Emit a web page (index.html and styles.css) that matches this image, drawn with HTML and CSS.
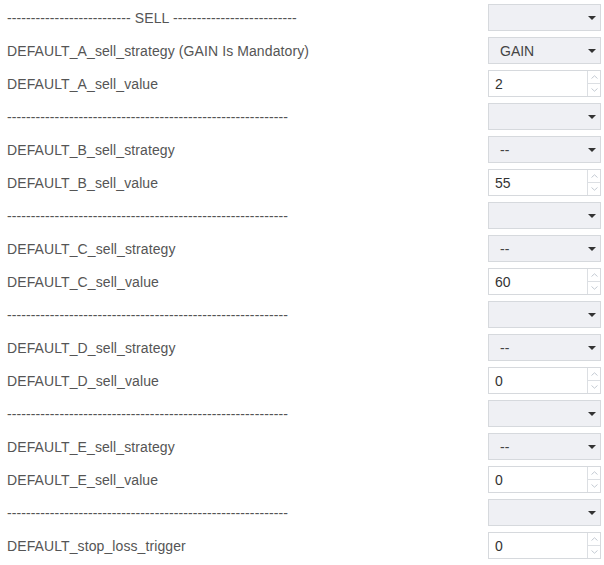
FILE: index.html
```html
<!DOCTYPE html>
<html>
<head>
<meta charset="utf-8">
<link rel="stylesheet" href="styles.css">
</head>
<body>
<div class="form">
  <div class="row"><span class="label">-------------------------- SELL --------------------------</span><div class="select"><span class="sel-text"></span><span class="arrow"></span></div></div>
  <div class="row"><span class="label">DEFAULT_A_sell_strategy (GAIN Is Mandatory)</span><div class="select"><span class="sel-text">GAIN</span><span class="arrow"></span></div></div>
  <div class="row"><span class="label">DEFAULT_A_sell_value</span><div class="num"><span class="num-text">2</span><div class="spin"><span class="up"><svg width="7" height="4" viewBox="0 0 7 4"><path d="M0.5 3.5 L3.5 0.8 L6.5 3.5" fill="none" stroke="#b4bcc6" stroke-width="0.8"/></svg></span><span class="down"><svg width="7" height="4" viewBox="0 0 7 4"><path d="M0.5 0.5 L3.5 3.2 L6.5 0.5" fill="none" stroke="#b4bcc6" stroke-width="0.8"/></svg></span></div></div></div>

  <div class="row"><span class="label">-----------------------------------------------------------</span><div class="select"><span class="sel-text"></span><span class="arrow"></span></div></div>
  <div class="row"><span class="label">DEFAULT_B_sell_strategy</span><div class="select"><span class="sel-text">--</span><span class="arrow"></span></div></div>
  <div class="row"><span class="label">DEFAULT_B_sell_value</span><div class="num"><span class="num-text">55</span><div class="spin"><span class="up"><svg width="7" height="4" viewBox="0 0 7 4"><path d="M0.5 3.5 L3.5 0.8 L6.5 3.5" fill="none" stroke="#b4bcc6" stroke-width="0.8"/></svg></span><span class="down"><svg width="7" height="4" viewBox="0 0 7 4"><path d="M0.5 0.5 L3.5 3.2 L6.5 0.5" fill="none" stroke="#b4bcc6" stroke-width="0.8"/></svg></span></div></div></div>

  <div class="row"><span class="label">-----------------------------------------------------------</span><div class="select"><span class="sel-text"></span><span class="arrow"></span></div></div>
  <div class="row"><span class="label">DEFAULT_C_sell_strategy</span><div class="select"><span class="sel-text">--</span><span class="arrow"></span></div></div>
  <div class="row"><span class="label">DEFAULT_C_sell_value</span><div class="num"><span class="num-text">60</span><div class="spin"><span class="up"><svg width="7" height="4" viewBox="0 0 7 4"><path d="M0.5 3.5 L3.5 0.8 L6.5 3.5" fill="none" stroke="#b4bcc6" stroke-width="0.8"/></svg></span><span class="down"><svg width="7" height="4" viewBox="0 0 7 4"><path d="M0.5 0.5 L3.5 3.2 L6.5 0.5" fill="none" stroke="#b4bcc6" stroke-width="0.8"/></svg></span></div></div></div>

  <div class="row"><span class="label">-----------------------------------------------------------</span><div class="select"><span class="sel-text"></span><span class="arrow"></span></div></div>
  <div class="row"><span class="label">DEFAULT_D_sell_strategy</span><div class="select"><span class="sel-text">--</span><span class="arrow"></span></div></div>
  <div class="row"><span class="label">DEFAULT_D_sell_value</span><div class="num"><span class="num-text">0</span><div class="spin"><span class="up"><svg width="7" height="4" viewBox="0 0 7 4"><path d="M0.5 3.5 L3.5 0.8 L6.5 3.5" fill="none" stroke="#b4bcc6" stroke-width="0.8"/></svg></span><span class="down"><svg width="7" height="4" viewBox="0 0 7 4"><path d="M0.5 0.5 L3.5 3.2 L6.5 0.5" fill="none" stroke="#b4bcc6" stroke-width="0.8"/></svg></span></div></div></div>

  <div class="row"><span class="label">-----------------------------------------------------------</span><div class="select"><span class="sel-text"></span><span class="arrow"></span></div></div>
  <div class="row"><span class="label">DEFAULT_E_sell_strategy</span><div class="select"><span class="sel-text">--</span><span class="arrow"></span></div></div>
  <div class="row"><span class="label">DEFAULT_E_sell_value</span><div class="num"><span class="num-text">0</span><div class="spin"><span class="up"><svg width="7" height="4" viewBox="0 0 7 4"><path d="M0.5 3.5 L3.5 0.8 L6.5 3.5" fill="none" stroke="#b4bcc6" stroke-width="0.8"/></svg></span><span class="down"><svg width="7" height="4" viewBox="0 0 7 4"><path d="M0.5 0.5 L3.5 3.2 L6.5 0.5" fill="none" stroke="#b4bcc6" stroke-width="0.8"/></svg></span></div></div></div>

  <div class="row"><span class="label">-----------------------------------------------------------</span><div class="select"><span class="sel-text"></span><span class="arrow"></span></div></div>
  <div class="row"><span class="label">DEFAULT_stop_loss_trigger</span><div class="num"><span class="num-text">0</span><div class="spin"><span class="up"><svg width="7" height="4" viewBox="0 0 7 4"><path d="M0.5 3.5 L3.5 0.8 L6.5 3.5" fill="none" stroke="#b4bcc6" stroke-width="0.8"/></svg></span><span class="down"><svg width="7" height="4" viewBox="0 0 7 4"><path d="M0.5 0.5 L3.5 3.2 L6.5 0.5" fill="none" stroke="#b4bcc6" stroke-width="0.8"/></svg></span></div></div></div>
</div>
</body>
</html>
```

FILE: styles.css
```css
html, body {
  margin: 0;
  padding: 0;
  background: #ffffff;
}
body {
  font-family: "Liberation Sans", Arial, sans-serif;
  font-size: 14px;
  color: #555555;
}
.form {
  width: 604px;
  padding-top: 1px;
}
.row {
  display: flex;
  align-items: center;
  justify-content: space-between;
  height: 33px;
  padding: 0 3px 0 7px;
  box-sizing: border-box;
}
.label {
  white-space: nowrap;
  letter-spacing: 0.1px;
}
.select {
  width: 113px;
  height: 27px;
  box-sizing: border-box;
  border: 1px solid #d6d9dd;
  background: #eff0f4;
  display: flex;
  align-items: center;
  justify-content: space-between;
  padding: 0 4px 0 11px;
  color: #444444;
}
.arrow {
  width: 0;
  height: 0;
  border-left: 4px solid transparent;
  border-right: 4px solid transparent;
  border-top: 4px solid #333333;
  margin-top: 1px;
}
.num {
  width: 113px;
  height: 27px;
  box-sizing: border-box;
  border: 1px solid #d6d9dd;
  background: #ffffff;
  display: flex;
  align-items: stretch;
  color: #333333;
}
.num-text {
  flex: 1;
  display: flex;
  align-items: center;
  padding-left: 6px;
}
.spin {
  width: 12px;
  border-left: 1px solid #dcdfe3;
  display: flex;
  flex-direction: column;
}
.up, .down {
  flex: 1;
  display: flex;
  align-items: center;
  justify-content: center;
}
.up {
  border-bottom: 1px solid #dcdfe3;
}
.up svg, .down svg {
  display: block;
}
```
